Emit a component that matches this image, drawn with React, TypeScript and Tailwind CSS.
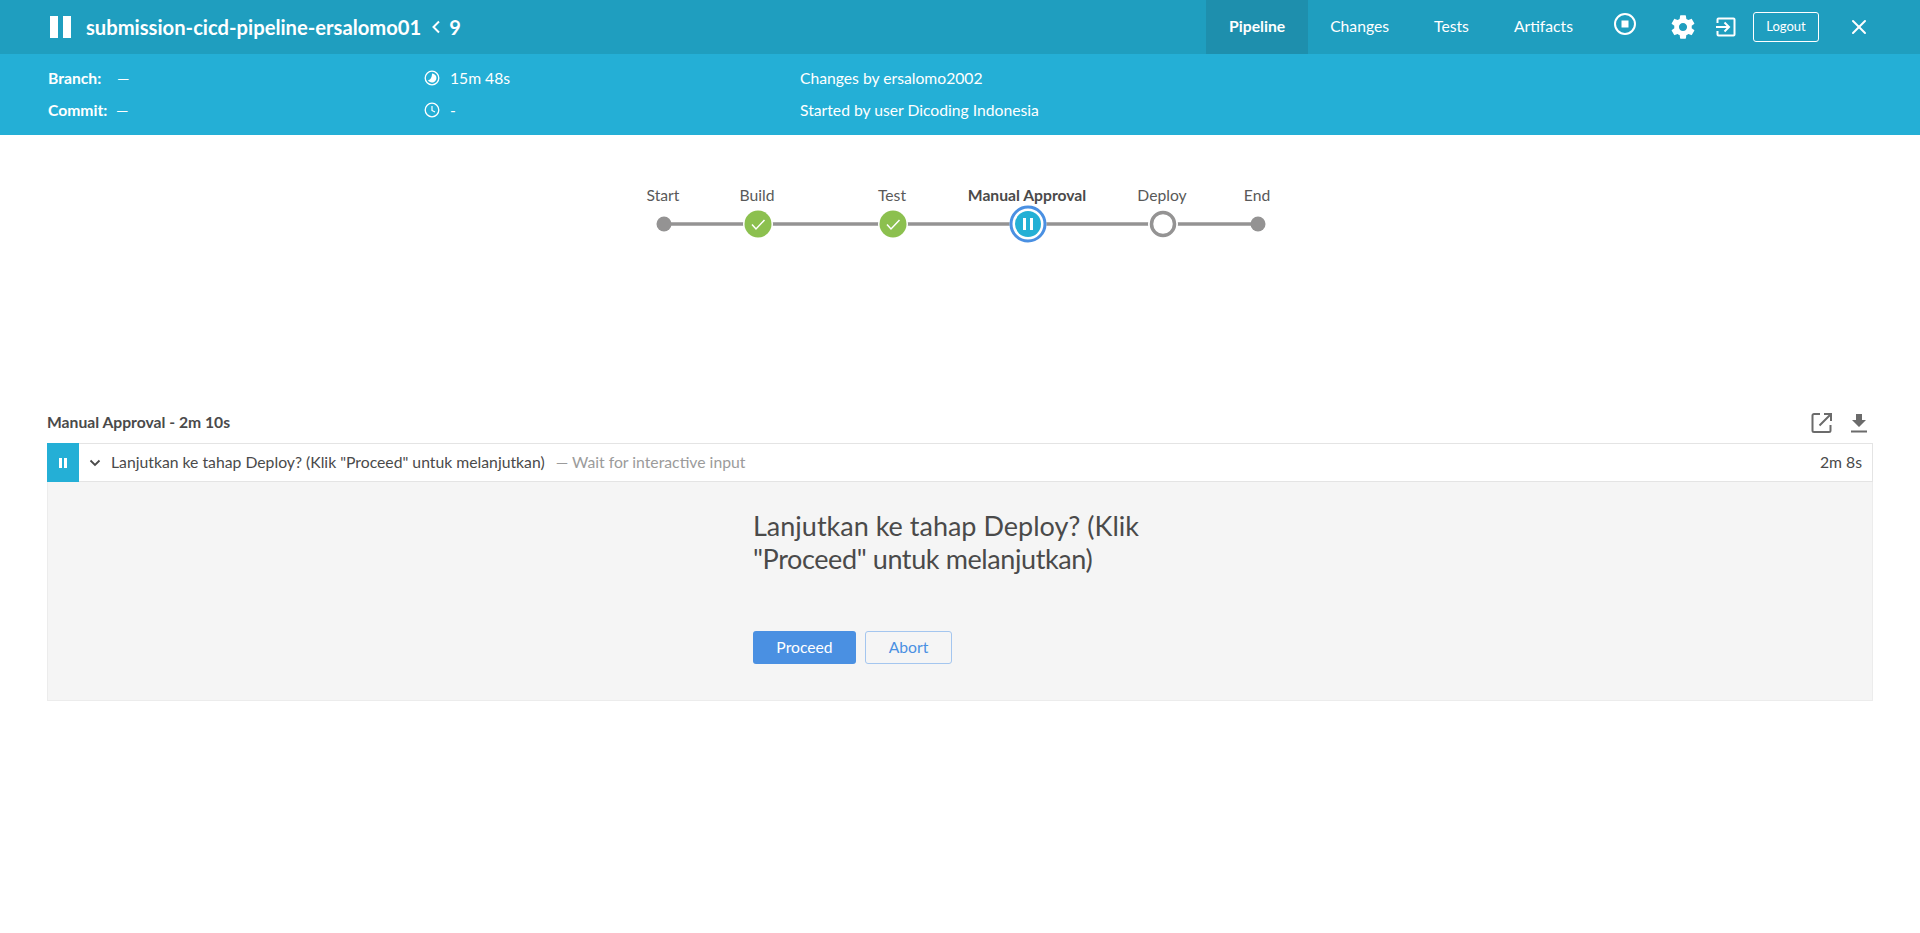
import { X } from 'lucide-react'

const nodes = [
  { label: 'Start', x: 664, kind: 'dot' },
  { label: 'Build', x: 758, kind: 'ok' },
  { label: 'Test', x: 893, kind: 'ok' },
  { label: 'Manual Approval', x: 1028, kind: 'paused' },
  { label: 'Deploy', x: 1163, kind: 'empty' },
  { label: 'End', x: 1258, kind: 'dot' },
]

function PauseBars({ className }: { className: string }) {
  return (
    <span className={`flex justify-between ${className}`}>
      <span className="h-full w-[36%] bg-white" />
      <span className="h-full w-[36%] bg-white" />
    </span>
  )
}

function PipelineGraph() {
  return (
    <div className="relative h-[270px]">
      <svg className="absolute left-0 top-0" width="1920" height="270">
        <line x1="664" y1="89" x2="1258" y2="89" stroke="#949393" strokeWidth="3.5" />
        {nodes.map((n) => {
          if (n.kind === 'dot') return <circle key={n.label} cx={n.x} cy="89" r="7.5" fill="#949393" />
          if (n.kind === 'ok')
            return (
              <g key={n.label}>
                <circle cx={n.x} cy="89" r="15" fill="#fff" />
                <circle cx={n.x} cy="89" r="13.5" fill="#8cc04f" />
                <path d={`M${n.x - 6} ${89.5}l4 4.5 8.5-9`} fill="none" stroke="#fff" strokeWidth="1.5" />
              </g>
            )
          if (n.kind === 'paused')
            return (
              <g key={n.label}>
                <circle cx={n.x} cy="89" r="18.5" fill="#fff" />
                <circle cx={n.x} cy="89" r="17" fill="#fff" stroke="#4a90e2" strokeWidth="3" />
                <circle cx={n.x} cy="89" r="13" fill="#24b0d5" />
                <rect x={n.x - 5} y="83" width="3" height="12" fill="#fff" />
                <rect x={n.x + 2} y="83" width="3" height="12" fill="#fff" />
              </g>
            )
          return (
            <g key={n.label}>
              <circle cx={n.x} cy="89" r="15" fill="#fff" />
              <circle cx={n.x} cy="89" r="11.5" fill="#fff" stroke="#949393" strokeWidth="3.5" />
            </g>
          )
        })}
      </svg>
      {nodes.map((n) => (
        <div
          key={n.label}
          className={`absolute top-[50px] -translate-x-1/2 whitespace-nowrap text-[15.7px] leading-5 ${
            n.kind === 'paused' ? 'font-bold text-[#4a4a4a]' : 'text-[#595959]'
          }`}
          style={{ left: n.x - (n.label === 'Start' ? 1 : 1) }}
        >
          {n.label}
        </div>
      ))}
    </div>
  )
}

export default function App() {
  return (
    <div className="min-h-[933px] bg-white font-['Lato','Noto_Sans',sans-serif] text-[#4a4a4a]">
      <header className="flex h-[54px] items-center bg-[#1f9ebf] text-white">
        <PauseBars className="ml-[50px] h-[22px] w-[21px]" />
        <div className="ml-[15px] text-[20.2px] font-bold leading-none">submission-cicd-pipeline-ersalomo01</div>
        <svg className="ml-[10px]" width="10" height="14" viewBox="0 0 10 14">
          <path d="M8 1.5 2.5 7 8 12.5" fill="none" stroke="#fff" strokeWidth="2" />
        </svg>
        <div className="ml-[8px] text-[20px] font-bold leading-none">9</div>
        <div className="ml-auto flex h-full items-center">
          <nav className="flex h-full items-center text-[15.7px]">
            <div className="flex h-full w-[102px] items-center justify-center bg-[#1e8fad] font-bold">Pipeline</div>
            <div className="ml-[22px]">Changes</div>
            <div className="ml-[45px]">Tests</div>
            <div className="ml-[45px]">Artifacts</div>
          </nav>
          <svg className="ml-[40px] -translate-y-[3px]" width="24" height="24" viewBox="0 0 24 24">
            <circle cx="12" cy="12" r="10" fill="none" stroke="#fff" strokeWidth="2" />
            <rect x="8.5" y="8.5" width="7" height="7" fill="#fff" />
          </svg>
          <svg className="ml-[32px]" width="28" height="28" viewBox="0 0 24 24">
            <path
              fill="#fff"
              d="M19.43 12.98c.04-.32.07-.64.07-.98s-.03-.66-.07-.98l2.11-1.65c.19-.15.24-.42.12-.64l-2-3.46c-.12-.22-.39-.3-.61-.22l-2.49 1c-.52-.4-1.08-.73-1.69-.98l-.38-2.65C14.46 2.18 14.25 2 14 2h-4c-.25 0-.46.18-.49.42l-.38 2.65c-.61.25-1.17.59-1.69.98l-2.49-1c-.23-.09-.49 0-.61.22l-2 3.46c-.13.22-.07.49.12.64l2.11 1.65c-.04.32-.07.65-.07.98s.03.66.07.98l-2.11 1.65c-.19.15-.24.42-.12.64l2 3.46c.12.22.39.3.61.22l2.49-1c.52.4 1.08.73 1.69.98l.38 2.65c.03.24.24.42.49.42h4c.25 0 .46-.18.49-.42l.38-2.65c.61-.25 1.17-.59 1.69-.98l2.49 1c.23.09.49 0 .61-.22l2-3.46c.12-.22.07-.49-.12-.64l-2.11-1.65zM12 15.5c-1.93 0-3.5-1.57-3.5-3.5s1.57-3.5 3.5-3.5 3.5 1.57 3.5 3.5-1.57 3.5-3.5 3.5z"
            />
          </svg>
          <svg className="ml-[17px]" width="24" height="24" viewBox="0 0 24 24">
            <path
              d="M3.5 8V4.5a1 1 0 0 1 1-1h15a1 1 0 0 1 1 1v15a1 1 0 0 1-1 1h-15a1 1 0 0 1-1-1V16M2 12h12M10.5 7.5 15 12l-4.5 4.5"
              fill="none"
              stroke="#fff"
              strokeWidth="2"
            />
          </svg>
          <div className="ml-[15px] flex h-[30px] w-[66px] items-center justify-center rounded-[3px] border border-white text-[13px]">
            Logout
          </div>
          <X className="ml-[28px] mr-[49px]" size={24} strokeWidth={2} />
        </div>
      </header>

      <div className="flex h-[81px] bg-[#24afd6] pl-[48px] text-[15.7px] leading-[32px] text-white">
        <div className="w-[376px] pt-[8px]">
          <div className="flex">
            <span className="w-[69px] font-bold">Branch:</span>
            <span>—</span>
          </div>
          <div className="flex">
            <span className="w-[68px] font-bold">Commit:</span>
            <span>—</span>
          </div>
        </div>
        <div className="w-[376px] pt-[8px]">
          <div className="flex items-center">
            <svg width="16" height="16" viewBox="0 0 16 16">
              <circle cx="8" cy="8" r="6.8" fill="none" stroke="#fff" strokeWidth="1.3" />
              <path d="M8 3.5A4.5 4.5 0 1 1 4 10.2C6 10 8 8 8 3.5Z" fill="#fff" />
            </svg>
            <span className="ml-[10px]">15m 48s</span>
          </div>
          <div className="flex items-center">
            <svg width="16" height="16" viewBox="0 0 16 16">
              <circle cx="8" cy="8" r="6.8" fill="none" stroke="#fff" strokeWidth="1.3" />
              <path d="M8 4v4.5l3 1.5" fill="none" stroke="#fff" strokeWidth="1.2" />
            </svg>
            <span className="ml-[10px]">-</span>
          </div>
        </div>
        <div className="pt-[8px]">
          <div>Changes by ersalomo2002</div>
          <div>Started by user Dicoding Indonesia</div>
        </div>
      </div>

      <PipelineGraph />

      <div className="px-[47px]">
        <div className="flex h-[38px] items-start justify-between">
          <div className="pt-[4px] text-[15.7px] font-bold leading-[26px] text-[#4a4a4a]">Manual Approval - 2m 10s</div>
          <div className="mr-[2px] flex items-center gap-[13px] pt-[6px] text-[#6b6b6b]">
            <svg width="24" height="24" viewBox="0 0 24 24">
              <path
                d="M10 3H4a1.5 1.5 0 0 0-1.5 1.5v15A1.5 1.5 0 0 0 4 21h15a1.5 1.5 0 0 0 1.5-1.5V14M14 3h7v7M21 3 9.5 14.5"
                fill="none"
                stroke="currentColor"
                strokeWidth="2"
              />
            </svg>
            <svg width="24" height="24" viewBox="0 0 24 24">
              <path d="M19 9h-4V3H9v6H5l7 7 7-7zM4 19.5h16V21.5H4z" fill="currentColor" />
            </svg>
          </div>
        </div>
        <div className="flex h-[39px] items-center border border-l-0 border-[#e4e4e4] bg-white text-[15.75px]">
          <div className="-my-px flex h-[39px] w-[32px] items-center justify-center bg-[#24afd6]">
            <PauseBars className="h-[10px] w-[8px]" />
          </div>
          <svg className="ml-[9px]" width="14" height="14" viewBox="0 0 14 14">
            <path d="M2.5 4.5 7 9l4.5-4.5" fill="none" stroke="#4a4a4a" strokeWidth="1.8" />
          </svg>
          <span className="ml-[9px] -translate-y-px">Lanjutkan ke tahap Deploy? (Klik "Proceed" untuk melanjutkan)</span>
          <span className="ml-[11px] -translate-y-px text-[#9b9b9b]">— Wait for interactive input</span>
          <span className="ml-auto mr-[10px] -translate-y-px">2m 8s</span>
        </div>
        <div className="h-[219px] border border-t-0 border-[#ececec] bg-[#f5f5f5] pl-[705px] pt-[27px]">
          <div className="w-[410px] text-[27px] leading-[33px] text-[#4a4a4a]">
            Lanjutkan ke tahap Deploy? (Klik <span className="tracking-[-0.4px]">"Proceed" untuk melanjutkan)</span>
          </div>
          <div className="mt-[56px] flex gap-[9px] text-[15.7px]">
            <div className="flex h-[33px] w-[103px] items-center justify-center rounded-[3px] bg-[#4a90e2] text-white">
              Proceed
            </div>
            <div className="flex h-[33px] w-[87px] items-center justify-center rounded-[3px] border border-[#a4c6ef] text-[#4a90e2]">
              Abort
            </div>
          </div>
        </div>
      </div>
    </div>
  )
}
